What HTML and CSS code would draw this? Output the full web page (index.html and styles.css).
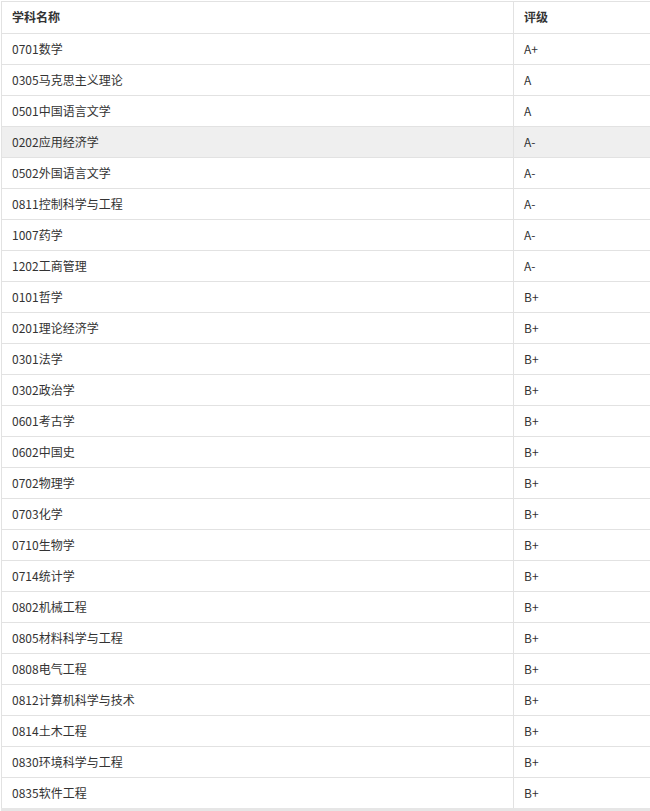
FILE: index.html
```html
<!DOCTYPE html>
<html lang="zh-CN">
<head>
<meta charset="utf-8">
<title>学科评级</title>
<link rel="stylesheet" href="styles.css">
</head>
<body>
<div class="wrap">
<table class="grade-table">
  <thead>
    <tr><th class="c-name">学科名称</th><th class="c-grade">评级</th></tr>
  </thead>
  <tbody>
    <tr><td>0701数学</td><td>A+</td></tr>
    <tr><td>0305马克思主义理论</td><td>A</td></tr>
    <tr><td>0501中国语言文学</td><td>A</td></tr>
    <tr class="hl"><td>0202应用经济学</td><td>A-</td></tr>
    <tr><td>0502外国语言文学</td><td>A-</td></tr>
    <tr><td>0811控制科学与工程</td><td>A-</td></tr>
    <tr><td>1007药学</td><td>A-</td></tr>
    <tr><td>1202工商管理</td><td>A-</td></tr>
    <tr><td>0101哲学</td><td>B+</td></tr>
    <tr><td>0201理论经济学</td><td>B+</td></tr>
    <tr><td>0301法学</td><td>B+</td></tr>
    <tr><td>0302政治学</td><td>B+</td></tr>
    <tr><td>0601考古学</td><td>B+</td></tr>
    <tr><td>0602中国史</td><td>B+</td></tr>
    <tr><td>0702物理学</td><td>B+</td></tr>
    <tr><td>0703化学</td><td>B+</td></tr>
    <tr><td>0710生物学</td><td>B+</td></tr>
    <tr><td>0714统计学</td><td>B+</td></tr>
    <tr><td>0802机械工程</td><td>B+</td></tr>
    <tr><td>0805材料科学与工程</td><td>B+</td></tr>
    <tr><td>0808电气工程</td><td>B+</td></tr>
    <tr><td>0812计算机科学与技术</td><td>B+</td></tr>
    <tr><td>0814土木工程</td><td>B+</td></tr>
    <tr><td>0830环境科学与工程</td><td>B+</td></tr>
    <tr><td>0835软件工程</td><td>B+</td></tr>
  </tbody>
</table>
</div>
</body>
</html>
```
FILE: styles.css
```css
html, body {
  margin: 0;
  padding: 0;
  background: #fff;
  overflow: hidden;
}
body {
  font-family: "Noto Sans CJK SC", "Noto Sans", sans-serif;
  font-size: 12px;
  color: #333;
}
.wrap {
  padding: 1px 0 0 1px;
  width: 649px;
  overflow: hidden;
}
.grade-table {
  border-collapse: collapse;
  width: 670px;
  table-layout: fixed;
}
.grade-table th,
.grade-table td {
  border: 1px solid #e2e2e2;
  padding: 0 10px 1px;
  text-align: left;
  line-height: 29px;
  height: 29px;
  box-sizing: content-box;
}
.grade-table th {
  font-weight: bold;
  height: 30px;
  line-height: 30px;
}
.c-name { width: 491px; }
.c-grade { width: auto; }
.grade-table tr.hl td {
  background: #efefef;
}
.grade-table tbody tr:last-child td {
  border-bottom: 3px solid #e6e6e6;
}
```
